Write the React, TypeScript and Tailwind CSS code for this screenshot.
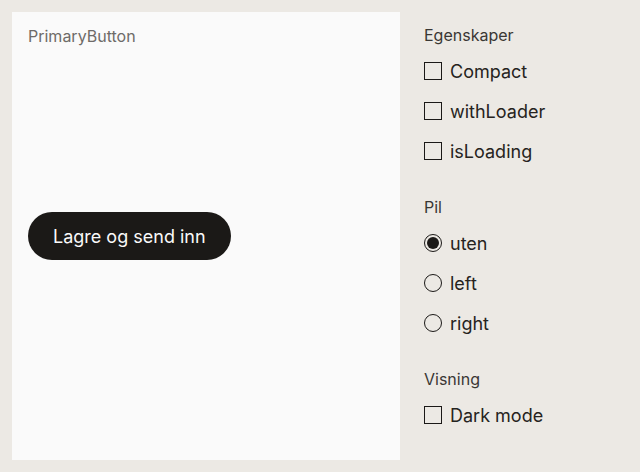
import React from "react";

function Check({ label }: { label: string }) {
  return (
    <label className="flex items-center h-[40px] gap-[8px]">
      <span className="w-[18px] h-[18px] border border-[#1b1917] bg-transparent shrink-0" />
      <span className="text-[18px] text-[#262320]">{label}</span>
    </label>
  );
}

function Radio({ label, checked }: { label: string; checked?: boolean }) {
  return (
    <label className="flex items-center h-[40px] gap-[8px]">
      <span className="w-[18px] h-[18px] rounded-full border border-[#1b1917] flex items-center justify-center shrink-0">
        {checked && <span className="w-[12px] h-[12px] rounded-full bg-[#1b1917]" />}
      </span>
      <span className="text-[18px] text-[#262320]">{label}</span>
    </label>
  );
}

export default function App() {
  return (
    <div
      className="w-[640px] h-[472px] bg-[#ece9e4] flex p-[12px] gap-[24px]"
      style={{ fontFamily: "Inter, 'Noto Sans', sans-serif" }}
    >
      <div className="w-[388px] h-[448px] bg-[#fafafa] flex flex-col px-[16px] pt-[14px]">
        <div className="text-[16px] text-[#6e6b68] leading-[20px]">PrimaryButton</div>
        <div className="flex-1 flex items-start pt-[166px]">
          <button className="h-[48px] px-[25px] rounded-full bg-[#1b1917] text-[#fafafa] text-[18px]">
            Lagre og send inn
          </button>
        </div>
      </div>
      <div className="flex flex-col pt-[13px]">
        <div className="text-[16px] text-[#3a3734] leading-[20px] mb-[6px]">Egenskaper</div>
        <Check label="Compact" />
        <Check label="withLoader" />
        <Check label="isLoading" />
        <div className="text-[16px] text-[#3a3734] leading-[20px] mt-[26px] mb-[6px]">Pil</div>
        <Radio label="uten" checked />
        <Radio label="left" />
        <Radio label="right" />
        <div className="text-[16px] text-[#3a3734] leading-[20px] mt-[26px] mb-[6px]">Visning</div>
        <Check label="Dark mode" />
      </div>
    </div>
  );
}
